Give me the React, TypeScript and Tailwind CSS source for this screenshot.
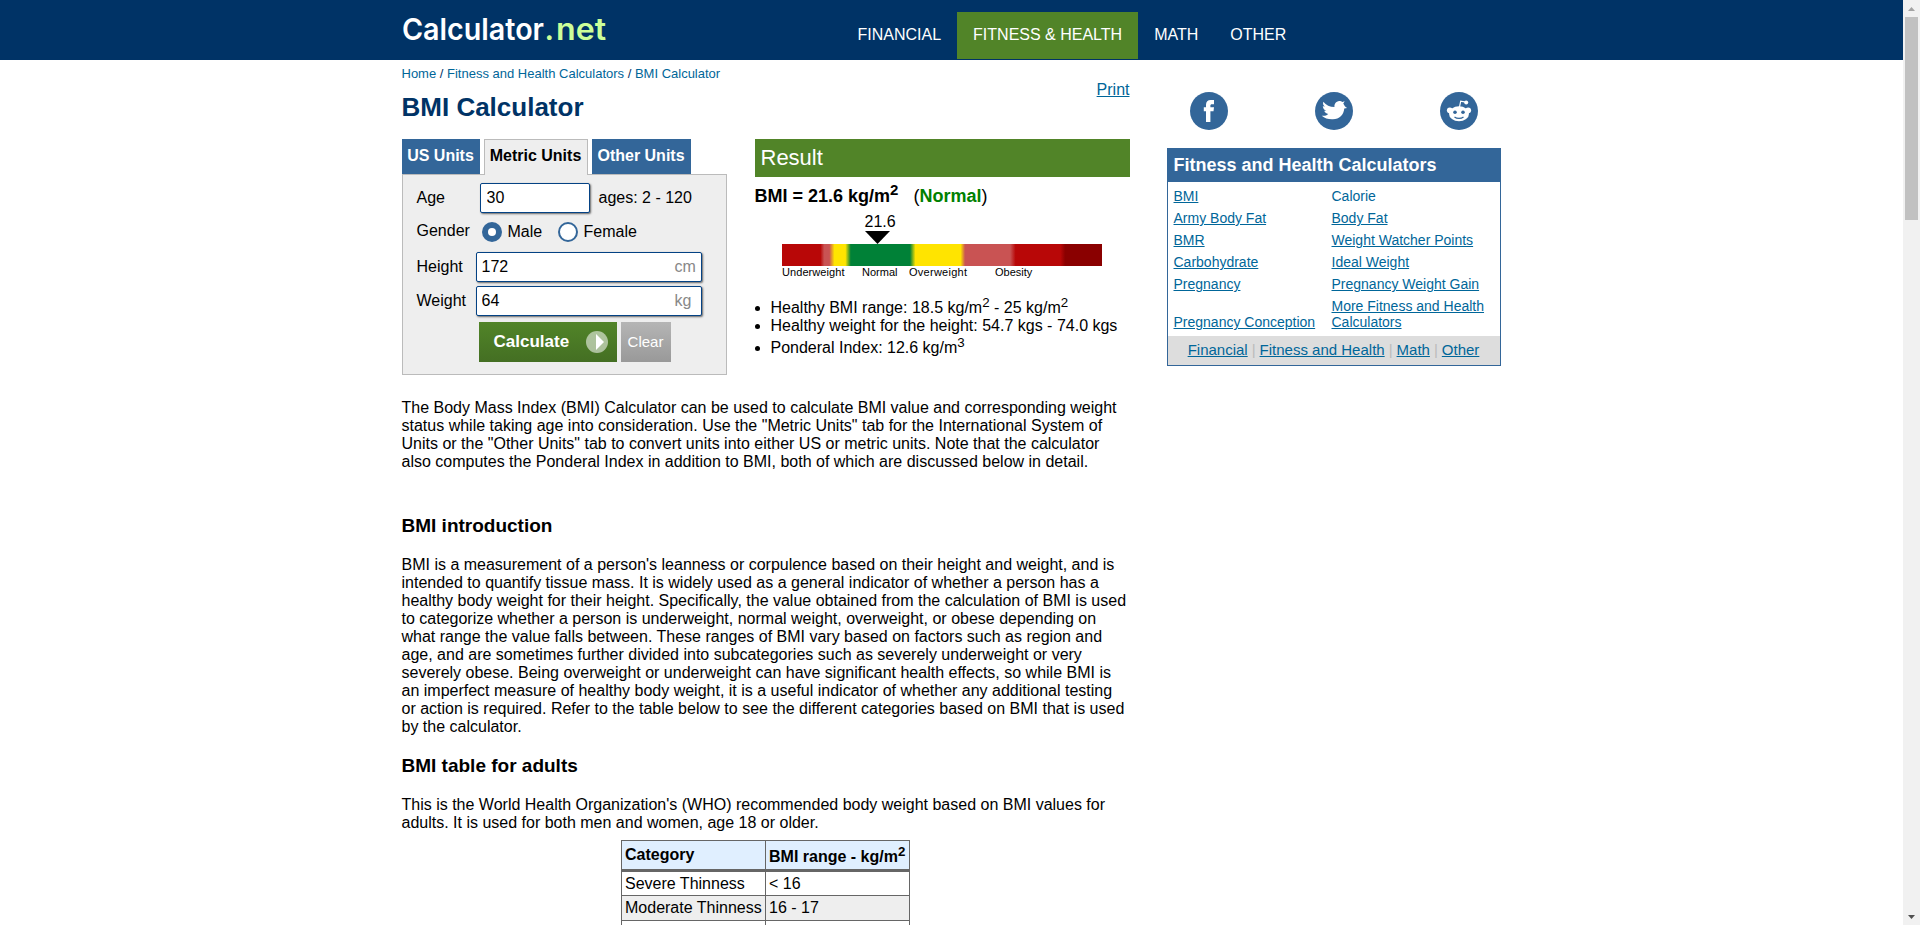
import React from "react";

const link = "text-[#006699] underline";

const navItems = [
  { label: "FINANCIAL", active: false },
  { label: "FITNESS & HEALTH", active: true },
  { label: "MATH", active: false },
  { label: "OTHER", active: false },
];

const sideLinks: [string, string][] = [
  ["BMI", "Calorie"],
  ["Army Body Fat", "Body Fat"],
  ["BMR", "Weight Watcher Points"],
  ["Carbohydrate", "Ideal Weight"],
  ["Pregnancy", "Pregnancy Weight Gain"],
  ["Pregnancy Conception", "More Fitness and Health Calculators"],
];

function Logo() {
  return (
    <svg width="216" height="46" viewBox="-4 0 216 46" className="-ml-1 mt-1 block" fontFamily="Inter, sans-serif" fontSize="30" fontWeight="600">
      <text x="0" y="36" fill="#ffffff" textLength="142" lengthAdjust="spacingAndGlyphs">Calculator</text>
      <text x="142.500" y="36" fill="#ccff99">.</text>
      <text x="154" y="36" fill="#ccff99" textLength="50" lengthAdjust="spacingAndGlyphs">net</text>
    </svg>
  );
}

function Header() {
  return (
    <header className="h-[60px] bg-[#003366]">
      <div className="mx-auto flex w-[1100px]">
        <div className="w-[440px]">
          <Logo />
        </div>
        <nav className="flex pt-3">
          {navItems.map((n) => (
            <a key={n.label} className={n.active ? "h-[47px] bg-[#518428] px-4 pt-[14px] text-white" : "h-[47px] px-4 pt-[14px] text-white"}>
              {n.label}
            </a>
          ))}
        </nav>
      </div>
    </header>
  );
}

function Field({ value, unit, className }: { value: string; unit?: string; className: string }) {
  return (
    <div className={"flex h-[30px] items-center rounded-[2px] border border-[#044284] bg-white shadow-[1px_1px_2px_#666] " + className}>
      <input defaultValue={value} className="w-0 grow bg-transparent text-black outline-none" />
      {unit && <span className="w-[26px] text-[#888888]">{unit}</span>}
    </div>
  );
}

function Radio({ on }: { on?: boolean }) {
  return (
    <svg width="20" height="20" viewBox="0 0 20 20" className="block">
      {on ? (
        <>
          <circle cx="10" cy="10" r="10" fill="#336699" />
          <circle cx="10" cy="10" r="4" fill="#fff" />
        </>
      ) : (
        <circle cx="10" cy="10" r="9" fill="#fff" stroke="#336699" strokeWidth="2" />
      )}
    </svg>
  );
}

function FormPanel() {
  return (
    <div className="w-[325px]">
      <div className="flex gap-1">
        <div className="h-[35px] w-[78px] bg-[#336699] pt-2 text-center font-bold text-white">US Units</div>
        <div className="relative z-10 -mb-px h-[36px] w-[104px] border border-b-0 border-[#bbbbbb] bg-[#eeeeee] pt-[7px] text-center font-bold text-black">Metric Units</div>
        <div className="h-[35px] w-[99px] bg-[#336699] pt-2 text-center font-bold text-white">Other Units</div>
      </div>
      <div className="h-[201px] border border-[#bbbbbb] bg-[#eeeeee] pl-[14px] pt-2">
        <div className="flex h-[30px] items-center">
          <span className="w-[63px] pb-px">Age</span>
          <Field value="30" className="w-[110px] pl-[6px]" />
          <span className="pb-px pl-[9px]">ages: 2 - 120</span>
        </div>
        <div className="mt-[9px] flex h-5 items-center">
          <span className="w-[65px] pb-[3px]">Gender</span>
          <Radio on />
          <span className="w-[56px] pb-px pl-[6px]">Male</span>
          <Radio />
          <span className="pb-px pl-[6px]">Female</span>
        </div>
        <div className="mt-[10px] flex h-[30px] items-center">
          <span className="w-[59px] pb-px">Height</span>
          <Field value="172" unit="cm" className="w-[226px] pl-[5px]" />
        </div>
        <div className="mt-1 flex h-[30px] items-center">
          <span className="w-[59px] pb-px">Weight</span>
          <Field value="64" unit="kg" className="w-[226px] pl-[5px]" />
        </div>
        <div className="mt-[6px] flex gap-1 pl-[62px]">
          <button className="flex h-10 w-[138px] items-center justify-between bg-linear-to-b from-[#518428] to-[#446f23] pl-[15px] pr-[9px] font-bold text-white">
            <span className="pb-px text-[17px]">Calculate</span>
            <svg width="22" height="22" viewBox="0 0 22 22">
              <circle cx="11" cy="11" r="11" fill="#fff" fillOpacity="0.55" />
              <path d="M10 3v16l8-8z" fill="#fff" />
            </svg>
          </button>
          <button className="h-10 w-[50px] bg-linear-to-b from-[#b5b5b5] to-[#999999] text-[15px] text-white">Clear</button>
        </div>
      </div>
    </div>
  );
}

function Gauge() {
  return (
    <svg width="375" height="70" viewBox="0 0 375 70" className="block" fontFamily="Liberation Sans, Arial, sans-serif">
      <defs>
        <linearGradient id="scale" x1="0" x2="1" y1="0" y2="0">
          <stop offset="0" stopColor="#b80707" />
          <stop offset="0.12" stopColor="#b80707" />
          <stop offset="0.132" stopColor="#c95353" />
          <stop offset="0.148" stopColor="#c95353" />
          <stop offset="0.164" stopColor="#ffe400" />
          <stop offset="0.198" stopColor="#ffe400" />
          <stop offset="0.215" stopColor="#008137" />
          <stop offset="0.4" stopColor="#008137" />
          <stop offset="0.417" stopColor="#ffe400" />
          <stop offset="0.558" stopColor="#ffe400" />
          <stop offset="0.572" stopColor="#c95353" />
          <stop offset="0.713" stopColor="#c95353" />
          <stop offset="0.73" stopColor="#b80707" />
          <stop offset="0.87" stopColor="#b80707" />
          <stop offset="0.885" stopColor="#8a0000" />
          <stop offset="1" stopColor="#8a0000" />
        </linearGradient>
      </defs>
      <text x="109.5" y="17" fontSize="16">21.6</text>
      <path d="M110 21h25l-12.5 13z" />
      <rect x="27" y="34" width="320" height="22" fill="url(#scale)" />
      <g fontSize="11">
        <text x="27" y="66" textLength="62.500">Underweight</text>
        <text x="107" y="66">Normal</text>
        <text x="154" y="66" textLength="58">Overweight</text>
        <text x="240" y="66">Obesity</text>
      </g>
    </svg>
  );
}

function Sup({ children }: { children: React.ReactNode }) {
  return <sup className="relative -top-[6px] align-baseline text-[13.33px] leading-none">{children}</sup>;
}

function Result() {
  return (
    <div className="w-[375px]">
      <div className="h-[38px] bg-[#518428] pl-[6px] pt-[6px] text-[22px] leading-[25px] text-white">Result</div>
      <div className="h-[33px] pt-[9px] text-[18px] leading-[21px]">
        <b>BMI = 21.6 kg/m<sup className="relative -top-[7px] align-baseline text-[15px] leading-none">2</sup></b>
        <span className="ml-[15px]">(<b className="text-[#008000]">Normal</b>)</span>
      </div>
      <Gauge />
      <ul className="ml-4 mt-[19px] list-disc">
        <li className="h-[18px]">Healthy BMI range: 18.5 kg/m<Sup>2</Sup> - 25 kg/m<Sup>2</Sup></li>
        <li className="h-[18px]">Healthy weight for the height: 54.7 kgs - 74.0 kgs</li>
        <li className="pt-1">Ponderal Index: 12.6 kg/m<Sup>3</Sup></li>
      </ul>
    </div>
  );
}

function Article() {
  return (
    <div className="text-black">
      <p className="w-[728px]">
        The Body Mass Index (BMI) Calculator can be used to calculate BMI value and corresponding weight<br />
        status while taking age into consideration. Use the "Metric Units" tab for the International System of<br />
        Units or the "Other Units" tab to convert units into either US or metric units. Note that the calculator<br />
        also computes the Ponderal Index in addition to BMI, both of which are discussed below in detail.
      </p>
      <h2 className="mt-[44px] text-[19px] font-bold leading-[22px]">BMI introduction</h2>
      <p className="mt-[19px] whitespace-nowrap">
        BMI is a measurement of a person's leanness or corpulence based on their height and weight, and is<br />
        intended to quantify tissue mass. It is widely used as a general indicator of whether a person has a<br />
        healthy body weight for their height. Specifically, the value obtained from the calculation of BMI is used<br />
        to categorize whether a person is underweight, normal weight, overweight, or obese depending on<br />
        what range the value falls between. These ranges of BMI vary based on factors such as region and<br />
        age, and are sometimes further divided into subcategories such as severely underweight or very<br />
        severely obese. Being overweight or underweight can have significant health effects, so while BMI is<br />
        an imperfect measure of healthy body weight, it is a useful indicator of whether any additional testing<br />
        or action is required. Refer to the table below to see the different categories based on BMI that is used<br />
        by the calculator.
      </p>
      <h2 className="mt-[19px] text-[19px] font-bold leading-[22px]">BMI table for adults</h2>
      <p className="mt-[19px] whitespace-nowrap">
        This is the World Health Organization's (WHO) recommended body weight based on BMI values for<br />
        adults. It is used for both men and women, age 18 or older.
      </p>
      <table className="mx-auto mt-2 w-[289px] table-fixed border-collapse border border-[#666666] [&_td]:border [&_td]:border-[#666666] [&_td]:px-[3px] [&_td]:py-0 [&_th]:border [&_th]:border-b-[3px] [&_th]:border-[#666666] [&_th]:px-[3px] [&_th]:py-0 [&_th]:text-left">
        <colgroup>
          <col className="w-[144px]" />
          <col className="w-[144px]" />
        </colgroup>
        <thead>
          <tr className="h-[30px] bg-[#e0efff]">
            <th>Category</th>
            <th className="whitespace-nowrap"><span className="relative top-[2px]">BMI range - kg/m<Sup>2</Sup></span></th>
          </tr>
        </thead>
        <tbody>
          <tr className="h-[25px]"><td className="whitespace-nowrap">Severe Thinness</td><td>&lt; 16</td></tr>
          <tr className="h-[25px] bg-[#eeeeee]"><td className="whitespace-nowrap">Moderate Thinness</td><td>16 - 17</td></tr>
        </tbody>
      </table>
      <div className="mx-auto flex h-4 w-[289px] border-x border-[#666666]">
        <div className="w-[144px] border-r border-[#666666]" />
      </div>
    </div>
  );
}

function Sidebar() {
  return (
    <aside className="-ml-px mr-px w-[334px] pt-8">
      <div className="flex justify-between pl-[23px] pr-[23px]">
        <svg width="38" height="38" viewBox="0 0 38 38">
          <circle cx="19" cy="19" r="19" fill="#336699" />
          <path d="M16 30V19.3h-2.200v-4.100H16v-2.500C16 9.600 17.700 8 20.700 8H24v4.200h-2c-1.200 0-1.600.5-1.600 1.500v1.500H24l-.5 4.100h-3.100V30z" fill="#fff" />
        </svg>
        <svg width="38" height="38" viewBox="0 0 38 38">
          <circle cx="19" cy="19" r="19" fill="#336699" />
          <path d="M6.700 23.800c3 .3 5-.3 6.600-1.900-2.200-.3-3.500-1.300-4-3.100h2c-2.200-.9-3.400-2.400-3.500-4.700.7.4 1.300.5 2 .5-1.600-1.300-2.100-2.700-1.500-4.800 2.800 3.600 6.500 5.100 11.200 5.300-.5-3 1.500-5.800 4.700-6.100 1.500 0 2.300.3 3 .9l2.500-.6-1.400 2.200c1.200 2.200 1.900 3.600 3.900 4.500l-2.900.4c-.7 6.500-4.800 10.600-11.400 10.900-4.600.2-8.200-1-11.200-3.500z" fill="#fff" />
        </svg>
        <svg width="38" height="38" viewBox="0 0 38 38">
          <circle cx="19" cy="19" r="19" fill="#336699" />
          <path d="M19.500 15l1.200-5.800 5 1" fill="none" stroke="#fff" strokeWidth="1.200" />
          <circle cx="26.200" cy="10.400" r="2" fill="#fff" />
          <circle cx="9.800" cy="18.300" r="2.900" fill="#fff" />
          <circle cx="28.200" cy="18.300" r="2.900" fill="#fff" />
          <ellipse cx="19" cy="21.800" rx="10" ry="7.500" fill="#fff" />
          <circle cx="15" cy="20.300" r="1.800" fill="#336699" />
          <circle cx="23" cy="20.300" r="1.800" fill="#336699" />
          <path d="M14.500 25c2.500 1.900 6.500 1.900 9 0" fill="none" stroke="#336699" strokeWidth="1.200" />
        </svg>
      </div>
      <div className="mt-[18px] h-[218px] border border-[#336699]">
        <div className="h-[33px] bg-[#336699] pl-[6px] pt-[6px] text-[18px] font-bold leading-[21px] text-white">Fitness and Health Calculators</div>
        <div className="flex h-[154px] flex-col gap-[6px] pl-[6px] pt-[6px] text-[14px] leading-4">
          {sideLinks.map(([a, b]) => (
            <div key={a} className="flex items-end">
              <div className="w-[158px]"><a className={link}>{a}</a></div>
              <div className="w-[160px]"><a className={b === "Calorie" ? "text-[#006699]" : link}>{b}</a></div>
            </div>
          ))}
        </div>
        <div className="flex h-[29px] justify-center gap-1 bg-[#dddddd] pt-[5px] text-[15px] leading-[17px] text-[#bbbbbb]">
          <a className={link}>Financial</a>|<a className={link}>Fitness and Health</a>|<a className={link}>Math</a>|<a className={link}>Other</a>
        </div>
      </div>
    </aside>
  );
}

function Scrollbar() {
  return (
    <div className="flex h-full w-[17px] flex-col items-center bg-[#f1f1f1]">
      <svg width="17" height="17" viewBox="0 0 17 17" className="block shrink-0"><path d="M5 11h7L8.500 7z" fill="#a3a3a3" /></svg>
      <div className="h-[203px] w-[13px] bg-[#c1c1c1]" />
      <div className="grow" />
      <svg width="17" height="17" viewBox="0 0 17 17" className="block shrink-0"><path d="M5 7h7l-3.500 4z" fill="#505050" /></svg>
    </div>
  );
}

export default function App() {
  return (
    <div className="flex h-[925px] w-[1920px] overflow-hidden bg-white font-['Liberation_Sans',Arial,sans-serif] text-[16px] leading-[18px] text-black">
      <div className="h-full w-[1903px] overflow-hidden">
        <Header />
        <div className="mx-auto flex w-[1100px] justify-between">
          <main className="w-[728px]">
            <div className="flex h-[79px] justify-between">
              <div>
                <div className="pt-[6px] text-[13px] leading-[15px] text-[#003366]">
                  <a className="text-[#006699]">Home</a> / <a className="text-[#006699]">Fitness and Health Calculators</a> / <a className="text-[#006699]">BMI Calculator</a>
                </div>
                <h1 className="mt-[11px] text-[26px] font-bold leading-[30px] text-[#003366]">BMI Calculator</h1>
              </div>
              <a className={"pt-[21px] " + link}>Print</a>
            </div>
            <div className="flex h-[260px] justify-between">
              <FormPanel />
              <Result />
            </div>
            <Article />
          </main>
          <Sidebar />
        </div>
      </div>
      <Scrollbar />
    </div>
  );
}
